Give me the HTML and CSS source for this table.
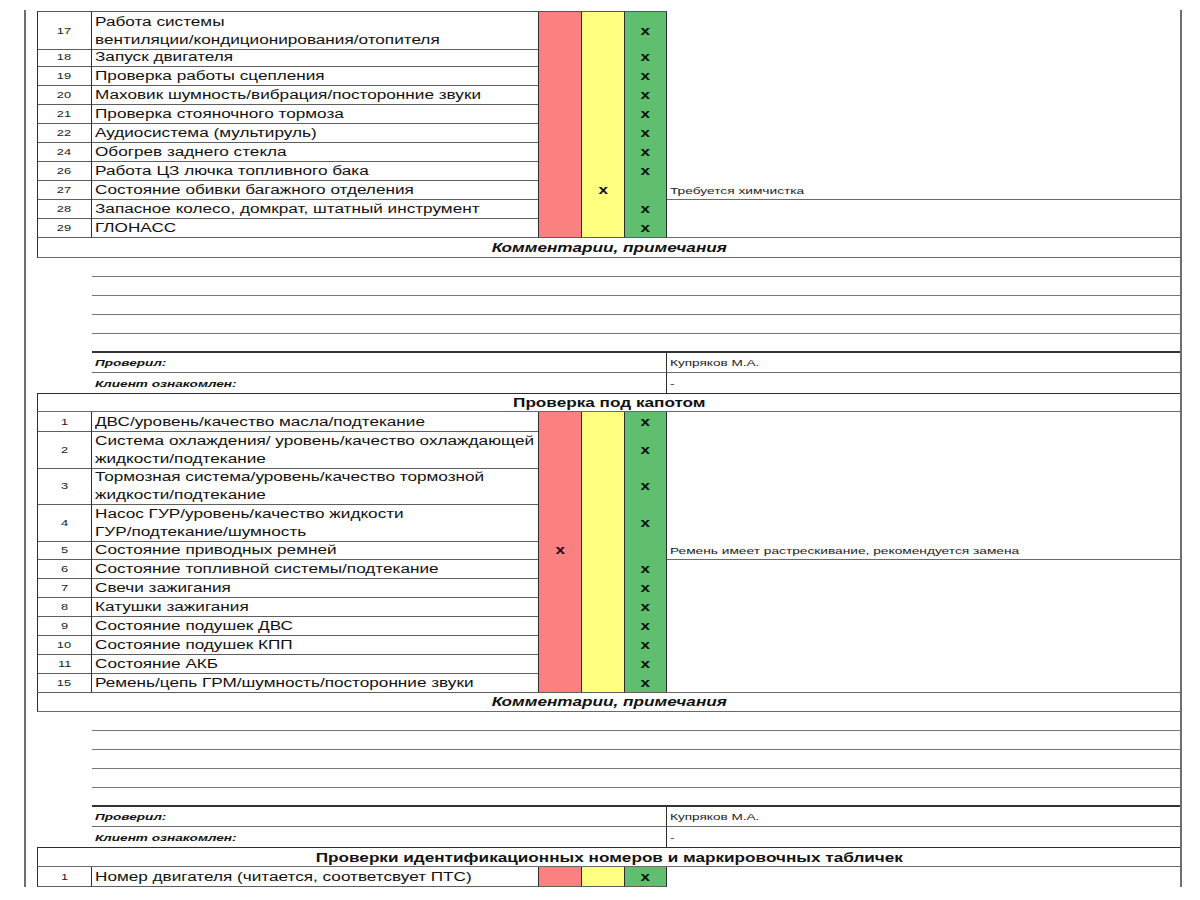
FILE: index.html
```html
<!DOCTYPE html>
<html lang="ru">
<head>
<meta charset="utf-8">
<title>Лист осмотра</title>
<link rel="stylesheet" href="styles.css">
</head>
<body>
<div class="page">
  <div class="sheet">

    <div class="row dbl top">
      <div class="c num"><span class="t">17</span></div>
      <div class="c desc"><span class="t">Работа системы<br>вентиляции/кондиционирования/отопителя</span></div>
      <div class="c red"></div><div class="c yel"></div>
      <div class="c grn"><span class="t mark">x</span></div>
      <div class="c note"></div>
    </div>
    <div class="row">
      <div class="c num"><span class="t">18</span></div>
      <div class="c desc"><span class="t">Запуск двигателя</span></div>
      <div class="c red"></div><div class="c yel"></div>
      <div class="c grn"><span class="t mark">x</span></div>
      <div class="c note"></div>
    </div>
    <div class="row">
      <div class="c num"><span class="t">19</span></div>
      <div class="c desc"><span class="t">Проверка работы сцепления</span></div>
      <div class="c red"></div><div class="c yel"></div>
      <div class="c grn"><span class="t mark">x</span></div>
      <div class="c note"></div>
    </div>
    <div class="row">
      <div class="c num"><span class="t">20</span></div>
      <div class="c desc"><span class="t">Маховик шумность/вибрация/посторонние звуки</span></div>
      <div class="c red"></div><div class="c yel"></div>
      <div class="c grn"><span class="t mark">x</span></div>
      <div class="c note"></div>
    </div>
    <div class="row">
      <div class="c num"><span class="t">21</span></div>
      <div class="c desc"><span class="t">Проверка стояночного тормоза</span></div>
      <div class="c red"></div><div class="c yel"></div>
      <div class="c grn"><span class="t mark">x</span></div>
      <div class="c note"></div>
    </div>
    <div class="row">
      <div class="c num"><span class="t">22</span></div>
      <div class="c desc"><span class="t">Аудиосистема (мультируль)</span></div>
      <div class="c red"></div><div class="c yel"></div>
      <div class="c grn"><span class="t mark">x</span></div>
      <div class="c note"></div>
    </div>
    <div class="row">
      <div class="c num"><span class="t">24</span></div>
      <div class="c desc"><span class="t">Обогрев заднего стекла</span></div>
      <div class="c red"></div><div class="c yel"></div>
      <div class="c grn"><span class="t mark">x</span></div>
      <div class="c note"></div>
    </div>
    <div class="row">
      <div class="c num"><span class="t">26</span></div>
      <div class="c desc"><span class="t">Работа ЦЗ лючка топливного бака</span></div>
      <div class="c red"></div><div class="c yel"></div>
      <div class="c grn"><span class="t mark">x</span></div>
      <div class="c note"></div>
    </div>
    <div class="row">
      <div class="c num"><span class="t">27</span></div>
      <div class="c desc"><span class="t">Состояние обивки багажного отделения</span></div>
      <div class="c red"></div>
      <div class="c yel"><span class="t mark">x</span></div>
      <div class="c grn"></div>
      <div class="c note lined"><span class="t">Требуется химчистка</span></div>
    </div>
    <div class="row">
      <div class="c num"><span class="t">28</span></div>
      <div class="c desc"><span class="t">Запасное колесо, домкрат, штатный инструмент</span></div>
      <div class="c red"></div><div class="c yel"></div>
      <div class="c grn"><span class="t mark">x</span></div>
      <div class="c note"></div>
    </div>
    <div class="row tall">
      <div class="c num"><span class="t">29</span></div>
      <div class="c desc"><span class="t">ГЛОНАСС</span></div>
      <div class="c red"></div><div class="c yel"></div>
      <div class="c grn"><span class="t mark">x</span></div>
      <div class="c note lined"></div>
    </div>

    <div class="head comments"><span class="t">Комментарии, примечания</span></div>
    <div class="blank"></div>
    <div class="blank"></div>
    <div class="blank"></div>
    <div class="blank"></div>
    <div class="blank last"></div>
    <div class="sign lined">
      <div class="s-gap"></div>
      <div class="s-label"><span class="t">Проверил:</span></div>
      <div class="s-value"><span class="t">Купряков М.А.</span></div>
    </div>
    <div class="sign">
      <div class="s-gap"></div>
      <div class="s-label"><span class="t">Клиент ознакомлен:</span></div>
      <div class="s-value"><span class="t">-</span></div>
    </div>

    <div class="head section"><span class="t">Проверка под капотом</span></div>
    <div class="row">
      <div class="c num"><span class="t">1</span></div>
      <div class="c desc"><span class="t">ДВС/уровень/качество масла/подтекание</span></div>
      <div class="c red"></div><div class="c yel"></div>
      <div class="c grn"><span class="t mark">x</span></div>
      <div class="c note"></div>
    </div>
    <div class="row dbl">
      <div class="c num"><span class="t">2</span></div>
      <div class="c desc"><span class="t">Система охлаждения/ уровень/качество охлаждающей<br>жидкости/подтекание</span></div>
      <div class="c red"></div><div class="c yel"></div>
      <div class="c grn"><span class="t mark">x</span></div>
      <div class="c note"></div>
    </div>
    <div class="row dbl plus">
      <div class="c num"><span class="t">3</span></div>
      <div class="c desc"><span class="t">Тормозная система/уровень/качество тормозной<br>жидкости/подтекание</span></div>
      <div class="c red"></div><div class="c yel"></div>
      <div class="c grn"><span class="t mark">x</span></div>
      <div class="c note"></div>
    </div>
    <div class="row dbl">
      <div class="c num"><span class="t">4</span></div>
      <div class="c desc"><span class="t">Насос ГУР/уровень/качество жидкости<br>ГУР/подтекание/шумность</span></div>
      <div class="c red"></div><div class="c yel"></div>
      <div class="c grn"><span class="t mark">x</span></div>
      <div class="c note"></div>
    </div>
    <div class="row">
      <div class="c num"><span class="t">5</span></div>
      <div class="c desc"><span class="t">Состояние приводных ремней</span></div>
      <div class="c red"><span class="t mark">x</span></div>
      <div class="c yel"></div>
      <div class="c grn"></div>
      <div class="c note lined"><span class="t">Ремень имеет растрескивание, рекомендуется замена</span></div>
    </div>
    <div class="row">
      <div class="c num"><span class="t">6</span></div>
      <div class="c desc"><span class="t">Состояние топливной системы/подтекание</span></div>
      <div class="c red"></div><div class="c yel"></div>
      <div class="c grn"><span class="t mark">x</span></div>
      <div class="c note"></div>
    </div>
    <div class="row">
      <div class="c num"><span class="t">7</span></div>
      <div class="c desc"><span class="t">Свечи зажигания</span></div>
      <div class="c red"></div><div class="c yel"></div>
      <div class="c grn"><span class="t mark">x</span></div>
      <div class="c note"></div>
    </div>
    <div class="row">
      <div class="c num"><span class="t">8</span></div>
      <div class="c desc"><span class="t">Катушки зажигания</span></div>
      <div class="c red"></div><div class="c yel"></div>
      <div class="c grn"><span class="t mark">x</span></div>
      <div class="c note"></div>
    </div>
    <div class="row">
      <div class="c num"><span class="t">9</span></div>
      <div class="c desc"><span class="t">Состояние подушек ДВС</span></div>
      <div class="c red"></div><div class="c yel"></div>
      <div class="c grn"><span class="t mark">x</span></div>
      <div class="c note"></div>
    </div>
    <div class="row">
      <div class="c num"><span class="t">10</span></div>
      <div class="c desc"><span class="t">Состояние подушек КПП</span></div>
      <div class="c red"></div><div class="c yel"></div>
      <div class="c grn"><span class="t mark">x</span></div>
      <div class="c note"></div>
    </div>
    <div class="row">
      <div class="c num"><span class="t">11</span></div>
      <div class="c desc"><span class="t">Состояние АКБ</span></div>
      <div class="c red"></div><div class="c yel"></div>
      <div class="c grn"><span class="t mark">x</span></div>
      <div class="c note"></div>
    </div>
    <div class="row">
      <div class="c num"><span class="t">15</span></div>
      <div class="c desc"><span class="t">Ремень/цепь ГРМ/шумность/посторонние звуки</span></div>
      <div class="c red"></div><div class="c yel"></div>
      <div class="c grn"><span class="t mark">x</span></div>
      <div class="c note lined"></div>
    </div>

    <div class="head comments"><span class="t">Комментарии, примечания</span></div>
    <div class="blank"></div>
    <div class="blank"></div>
    <div class="blank"></div>
    <div class="blank"></div>
    <div class="blank last"></div>
    <div class="sign lined">
      <div class="s-gap"></div>
      <div class="s-label"><span class="t">Проверил:</span></div>
      <div class="s-value"><span class="t">Купряков М.А.</span></div>
    </div>
    <div class="sign">
      <div class="s-gap"></div>
      <div class="s-label"><span class="t">Клиент ознакомлен:</span></div>
      <div class="s-value"><span class="t">-</span></div>
    </div>

    <div class="head section tall"><span class="t">Проверки идентификационных номеров и маркировочных табличек</span></div>
    <div class="row">
      <div class="c num"><span class="t">1</span></div>
      <div class="c desc"><span class="t">Номер двигателя (читается, соответсвует ПТС)</span></div>
      <div class="c red"></div><div class="c yel"></div>
      <div class="c grn"><span class="t mark">x</span></div>
      <div class="c note"></div>
    </div>

  </div>
</div>
</body>
</html>
```

FILE: styles.css
```css
html, body {
  margin: 0;
  padding: 0;
  background: #ffffff;
}

body {
  font-family: "Liberation Sans", Arial, sans-serif;
  color: #111;
}

.page {
  margin: 10px 0 0 24px;
  width: 1158px;
  height: 877px;
  box-sizing: border-box;
  border-left: 2px solid #6e6e6e;
  border-right: 2px solid #6e6e6e;
  overflow: hidden;
}

.sheet {
  padding: 1px 0 0 11px;
}

/* scaled text: the source glyphs are drawn wide */
.t {
  display: inline-block;
  white-space: nowrap;
  transform: scaleX(1.43);
  transform-origin: left center;
}

/* check rows */
.row {
  display: grid;
  grid-template-columns: 55px 447px 43px 43px 42px 1fr;
  height: 19px;
}

.row.tall { height: 20px; }
.row.dbl { height: 36px; }
.row.dbl.plus { height: 37px; }

.c {
  box-sizing: border-box;
  border-bottom: 1px solid #5e5e5e;
  border-right: 1px solid #2e2e2e;
  display: flex;
  align-items: center;
  padding-top: 1px;
}

.row.top .c { border-top: 1px solid #555; }
.row.top .note { border-top: none; }

.num {
  border-left: 1px solid #2e2e2e;
  justify-content: center;
  font-size: 9px;
  color: #222;
}

.num .t { transform-origin: center; }

.desc {
  padding-left: 3px;
  font-size: 12px;
  line-height: 18px;
}

.red { background: #fb8080; justify-content: center; }
.yel { background: #ffff80; justify-content: center; }
.grn { background: #5fbf6e; justify-content: center; }

.mark {
  font-weight: bold;
  font-size: 12px;
  transform-origin: center;
}

.note {
  border: none;
  padding-left: 3px;
  font-size: 9.6px;
  color: #222;
}

.note.lined { border-bottom: 1px solid #6a6a6a; }

/* headers spanning full width */
.head {
  box-sizing: border-box;
  border-left: 1px solid #2e2e2e;
  border-bottom: 1px solid #6a6a6a;
  display: flex;
  align-items: center;
  justify-content: center;
  font-size: 12px;
  font-weight: bold;
  padding-top: 1px;
}

.head .t { transform-origin: center; }

.head.comments {
  height: 20px;
  font-style: italic;
}

.head.section {
  height: 19px;
  border-top: 1px solid #2e2e2e;
}

.head.section.tall { height: 20px; }

/* empty comment lines */
.blank {
  box-sizing: border-box;
  height: 19px;
  margin-left: 55px;
  border-bottom: 1px solid #777;
}

.blank.last {
  border-bottom: 2px solid #333;
}

/* signature rows */
.sign {
  display: grid;
  grid-template-columns: 55px 575px 1fr;
  height: 20px;
}

.s-label,
.s-value {
  box-sizing: border-box;
  display: flex;
  align-items: center;
  padding-left: 3px;
}

.sign.lined .s-label,
.sign.lined .s-value {
  border-bottom: 1px solid #6a6a6a;
}

.s-label {
  border-right: 1px solid #2e2e2e;
  font-size: 9.5px;
  font-weight: bold;
  font-style: italic;
}

.s-value {
  font-size: 9.5px;
  color: #222;
}
```
